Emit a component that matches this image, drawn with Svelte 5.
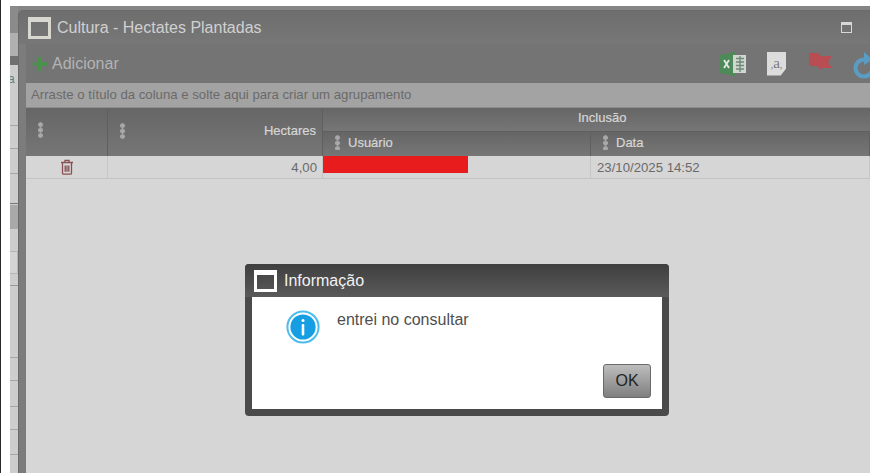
<!--
  Hectares dialog behind a modal info message. Colours are the dimmed ones,
  since the page sits behind the modal mask.
-->
<script lang="ts">
	// rows of the page peeking out left of the dialog
	const lowerRows = [72, 23, 26, 23, 25, 30];
</script>

<div class="page">
	<div class="edge"></div>
	<div class="backdrop">
		<div class="side">
			<div class="side-top"></div>
			<div class="side-tab"></div>
			<div class="side-dark"></div>
			<div class="side-cell letter">a</div>
			<div class="side-cell row-23"></div>
			<div class="side-cell row-25"></div>
			<div class="side-cell row-30"></div>
			<div class="side-tab2"></div>
			<div class="side-input"><span></span></div>
			{#each lowerRows as h, i (i)}
				<div class="side-cell" style="height: {h}px"></div>
			{/each}
		</div>

		<section class="window">
			<header class="win-title">
				<span class="win-icon"></span>
				<h1>Cultura - Hectates Plantadas</h1>
				<span class="win-max"></span>
			</header>

			<div class="win-body">
				<div class="toolbar">
					<svg class="plus" width="14" height="14" viewBox="0 0 14 14" aria-hidden="true">
						<path d="M5 0h4v5h5v4H9v5H5V9H0V5h5z" fill="#4c914f" />
					</svg>
					<span class="add">Adicionar</span>
					<div class="tools">
						<svg width="26" height="24" viewBox="0 0 26 24" aria-hidden="true">
							<path d="M0 3l15-3v24L0 21z" fill="#4d8a58" />
							<rect x="13" y="3" width="13" height="18" fill="#d2d6d2" />
							<path d="M16 6.5h8M16 10h8M16 13.5h8M16 17h8M20 4v16" stroke="#6f8a76" stroke-width="1.4" />
							<path d="M4 8l5 8M9 8l-5 8" stroke="#e6e6e6" stroke-width="1.8" />
						</svg>
						<span class="doc"><i>,</i>a<i>,</i></span>
						<svg class="flag" width="23" height="19" viewBox="0 0 23 19" aria-hidden="true">
							<path d="M0 0h11v3h12l-4 6 4 6H13v3l-5-5H0z" fill="#b84e53" />
						</svg>
						<svg class="refresh" width="24" height="28" viewBox="0 0 24 28" aria-hidden="true">
							<path d="M11 8.5a8.5 8.5 0 1 0 8.5 9" fill="none" stroke="#5a9dc4" stroke-width="4.2" />
							<path d="M11 1l8.5 7.5L11 14z" fill="#5a9dc4" />
						</svg>
					</div>
				</div>

				<div class="group-hint">Arraste o título da coluna e solte aqui para criar um agrupamento</div>

				<div class="grid">
					<div class="th actions"><span class="grip"></span></div>
					<div class="th hectares"><span class="grip"></span><b>Hectares</b></div>
					<div class="th inclusao"><b>Inclusão</b></div>
					<div class="th sub"><span class="grip small"></span><b>Usuário</b></div>
					<div class="th sub"><span class="grip small"></span><b>Data</b></div>

					<div class="td trash">
						<svg width="14" height="16" viewBox="0 0 14 16" aria-hidden="true">
							<path d="M1 3.5h12M5 3V1.3h4V3M2.5 4v10.2c0 .6.4 1 1 1h7c.6 0 1-.4 1-1V4M5.2 6.5v6.2M7 6.5v6.2M8.8 6.5v6.2" fill="none" stroke="#8a4f52" stroke-width="1.3" />
						</svg>
					</div>
					<div class="td num">4,00</div>
					<div class="td user"><span class="redacted"></span></div>
					<div class="td">23/10/2025 14:52</div>
				</div>
			</div>
		</section>
	</div>

	<div class="modal" role="dialog" aria-label="Informação">
		<header class="modal-title">
			<span class="win-icon light"></span>
			<h2>Informação</h2>
		</header>
		<div class="modal-body">
			<div class="message">
				<svg width="34" height="34" viewBox="0 0 34 34" aria-hidden="true">
					<circle cx="17" cy="17" r="15.6" fill="#fff" stroke="#4dbcec" stroke-width="2" />
					<circle cx="17" cy="17" r="12.6" fill="#159fe2" />
					<circle cx="17" cy="10.5" r="1.5" fill="#fff" />
					<rect x="15.7" y="14" width="2.6" height="11.5" rx="1" fill="#fff" />
				</svg>
				<p>entrei no consultar</p>
			</div>
			<div class="modal-actions">
				<button type="button">OK</button>
			</div>
		</div>
	</div>
</div>

<style>
	:global(body) {
		margin: 0;
		background: #fff;
		overflow: hidden;
	}

	.page {
		position: relative;
		display: flex;
		width: 873px;
		height: 473px;
		overflow: hidden;
		padding-right: 3px;
		box-sizing: border-box;
		font-family: "Liberation Sans", Arial, sans-serif;
		background: #fff;
	}

	.edge {
		flex: 0 0 10px;
		box-sizing: border-box;
		border-left: 1px solid #2a2a2a;
	}

	.backdrop {
		flex: 1;
		min-width: 0;
		display: flex;
		margin-top: 6px;
		background: #858585;
	}

	.side {
		flex: 0 0 8px;
		display: flex;
		flex-direction: column;
		background: #cdcdcd;
		overflow: hidden;
	}

	.side-top {
		flex: 0 0 27px;
		background: #8b8b8b;
	}
	.side-tab {
		flex: 0 0 23px;
		background: #b0b0b0;
	}
	.side-dark {
		flex: 0 0 9px;
		background: #707070;
	}
	.side-cell {
		flex: 0 0 auto;
		box-sizing: border-box;
		border-bottom: 1px solid #a6a6a6;
	}
	.side-cell.letter {
		height: 61px;
		font-size: 12px;
		line-height: 28px;
		color: #5f7f80;
		text-indent: -2px;
	}
	.side-cell.row-23 {
		height: 23px;
	}
	.side-cell.row-25 {
		height: 25px;
	}
	.side-cell.row-30 {
		height: 30px;
		border-bottom-color: #777;
	}
	.side-tab2 {
		flex: 0 0 24px;
		background: #a9a9a9;
		margin-top: 1px;
	}
	.side-input {
		flex: 0 0 57px;
		box-sizing: border-box;
		padding-top: 22px;
		border-bottom: 1px solid #9a9a9a;
	}
	.side-input span {
		display: block;
		height: 21px;
		border: 1px solid #b5b5b5;
		border-left: 0;
		background: #d4d4d4;
	}

	.window {
		flex: 1;
		min-width: 0;
		margin-top: 4px;
		display: flex;
		flex-direction: column;
		overflow: hidden;
		background: #7c7c7c;
		border-top: 1px solid #6a6a6a;
		border-left: 1px solid #6a6a6a;
		border-radius: 5px 0 0 0;
		box-sizing: border-box;
	}

	.win-title {
		flex: 0 0 33px;
		display: flex;
		align-items: center;
		padding: 0 18px 0 9px;
		background: linear-gradient(#6e6e6e, #777);
	}

	.win-icon {
		flex: none;
		box-sizing: border-box;
		width: 23px;
		height: 22px;
		border: 3px solid #d8d8d0;
		border-top-width: 5px;
	}
	.win-icon.light {
		border-color: #fff;
	}

	.win-title h1 {
		flex: 1;
		margin: 0 0 0 6px;
		font-size: 16px;
		font-weight: 400;
		color: #d0d0d0;
		white-space: nowrap;
	}

	.win-max {
		box-sizing: border-box;
		width: 11px;
		height: 11px;
		border: 1px solid #d8d8d8;
		border-top-width: 3px;
	}

	.win-body {
		flex: 1;
		min-width: 0;
		margin-left: 7px;
		display: flex;
		flex-direction: column;
		background: #d6d6d6;
	}

	.toolbar {
		flex: 0 0 39px;
		display: flex;
		align-items: center;
		padding-left: 7px;
		background: #747474;
	}

	.plus {
		flex: none;
	}

	.add {
		margin-left: 5px;
		font-size: 16px;
		color: #b3b3b3;
	}

	.tools {
		margin-left: auto;
		display: flex;
		align-items: center;
		gap: 21px;
		margin-right: -7px;
	}

	.flag {
		margin: -3px 0 0 2px;
	}

	.refresh {
		margin-top: 3px;
	}

	.doc {
		box-sizing: border-box;
		width: 19px;
		height: 24px;
		background: #dcdcdc;
		clip-path: polygon(0 0, 100% 0, 100% 72%, 72% 100%, 0 100%);
		font-family: "Liberation Serif", serif;
		font-size: 15px;
		line-height: 22px;
		text-align: center;
		color: #7d7d7d;
		white-space: nowrap;
		overflow: hidden;
	}
	.doc i {
		font-style: normal;
		font-size: 10px;
	}

	.group-hint {
		flex: 0 0 24px;
		box-sizing: border-box;
		padding-left: 5px;
		font-size: 13.2px;
		line-height: 24px;
		color: #6a6a6a;
		background: #a3a3a3;
		border-bottom: 1px solid #8c8c8c;
		white-space: nowrap;
	}

	.grid {
		display: grid;
		grid-template-columns: 82px 215px 268px 1fr;
		grid-template-rows: 24px 24px 23px;
		font-size: 13px;
	}

	.th {
		box-sizing: border-box;
		display: flex;
		align-items: center;
		background: linear-gradient(#666, #767676);
		border-right: 1px solid #5f5f5f;
		color: #d6d6d6;
	}
	.th b {
		font-weight: 400;
		-webkit-text-stroke: 0.2px #d6d6d6;
	}

	.actions,
	.hectares {
		grid-row: 1 / span 2;
	}
	.actions {
		padding-left: 12px;
		padding-bottom: 4px;
	}
	.hectares {
		padding: 0 6px 3px 12px;
	}
	.hectares b {
		margin-left: auto;
	}
	.inclusao {
		grid-column: 3 / span 2;
		padding: 0 0 4px 255px;
		border-right: 0;
		border-bottom: 1px solid #5f5f5f;
	}
	.sub {
		padding: 0 0 3px 12px;
		gap: 8px;
	}

	.grip {
		display: block;
		width: 5px;
		height: 16px;
		background: radial-gradient(circle at 50% 50%, #a8a8a8 2.2px, transparent 2.6px) 0 0 / 5px 5.4px repeat-y;
	}
	.grip.small {
		height: 15px;
	}

	.td {
		box-sizing: border-box;
		display: flex;
		align-items: center;
		padding-left: 6px;
		font-size: 13.2px;
		color: #6a6a6a;
		border-right: 1px solid #c6c6c6;
		border-bottom: 1px solid #c4c4c4;
	}
	.trash {
		justify-content: center;
		padding: 0;
	}
	.num {
		justify-content: flex-end;
		padding: 0 5px 0 0;
	}
	.user {
		align-items: flex-start;
		padding: 0;
	}
	.redacted {
		display: block;
		width: 145px;
		height: 17px;
		background: #e81c1c;
	}

	.modal {
		position: absolute;
		left: 245px;
		top: 264px;
		width: 424px;
		height: 152px;
		box-sizing: border-box;
		display: flex;
		flex-direction: column;
		padding: 0 7px 7px;
		border-radius: 4px;
		background: #4a4a4a;
	}

	.modal-title {
		flex: 0 0 33px;
		display: flex;
		align-items: center;
		margin: 0 -7px;
		padding: 0 9px;
		border-radius: 4px 4px 0 0;
		background: linear-gradient(#3f3f3f, #5a5a5a);
	}
	.modal-title h2 {
		margin: 0 0 0 7px;
		font-size: 16px;
		font-weight: 400;
		color: #f2f2f2;
	}

	.modal-body {
		flex: 1;
		display: flex;
		flex-direction: column;
		justify-content: space-between;
		background: #fff;
	}

	.message {
		display: flex;
		align-items: flex-start;
		padding: 13px 0 0 34px;
	}
	.message p {
		margin: 1px 0 0 17px;
		font-size: 16px;
		line-height: 18px;
		color: #4f4f4f;
	}

	.modal-actions {
		display: flex;
		justify-content: flex-end;
		padding: 0 11px 11px 0;
	}
	.modal-actions button {
		box-sizing: border-box;
		width: 48px;
		height: 34px;
		padding: 0;
		font-family: inherit;
		font-size: 16px;
		color: #222;
		border: 1px solid #6a6a6a;
		border-radius: 3px;
		background: linear-gradient(#bdbdbd, #7f7f7f);
	}
</style>
